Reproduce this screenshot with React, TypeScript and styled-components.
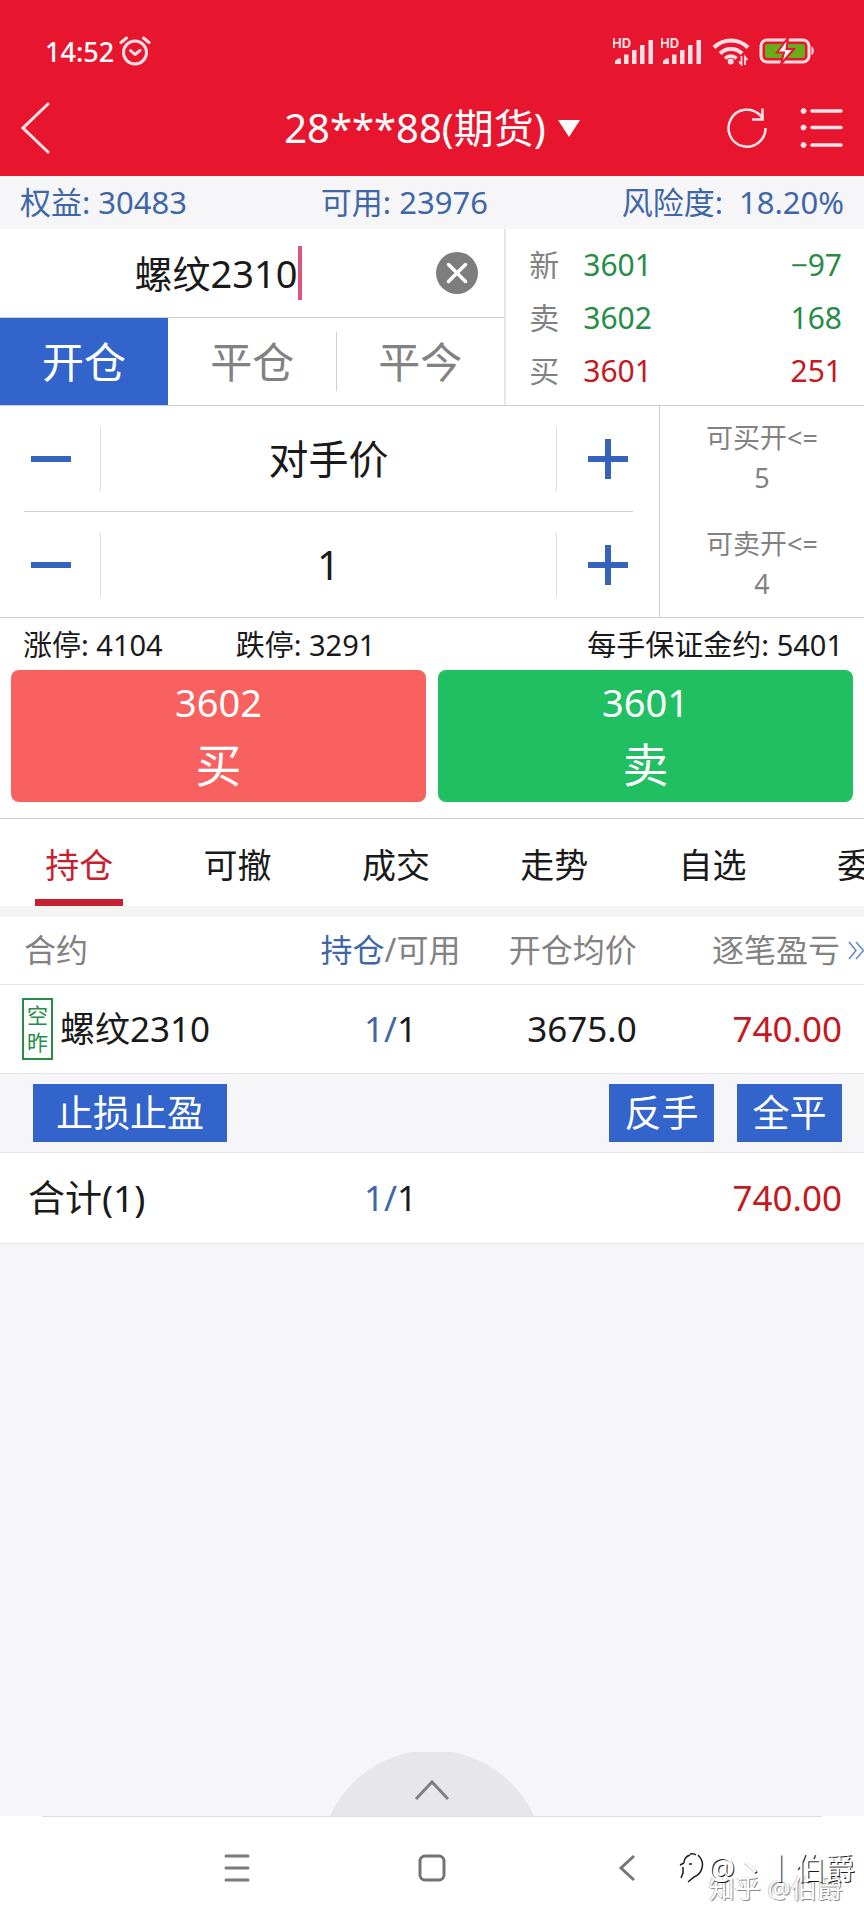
import React, { useState } from "react";
import styled, { createGlobalStyle, css } from "styled-components";

const color = {
  brand: "#e8152f",
  blue: "#3264cc",
  blueText: "#3f67a8",
  green: "#278c46",
  red: "#c3191f",
  ink: "#1a1a1a",
  grey: "#828282",
  line: "#cfcfd2",
  panel: "#f6f6f9",
};

const GlobalStyle = createGlobalStyle`
  * { box-sizing: border-box; }
  body {
    margin: 0;
    background: #fff;
    color: ${color.ink};
    font-family: "Noto Sans", "Noto Sans CJK SC", sans-serif;
  }
  button, input {
    font: inherit;
    color: inherit;
    border: 0;
    margin: 0;
    padding: 0;
    background: none;
    border-radius: 0;
  }
  button { cursor: pointer; }
  svg { display: block; }
`;

const Screen = styled.div`
  display: flex;
  flex-direction: column;
  min-height: 100vh;
  overflow: hidden;
`;

/* Header */
const Header = styled.header`
  background: ${color.brand};
  color: #fff;
`;

const StatusBar = styled.div`
  display: flex;
  align-items: center;
  justify-content: space-between;
  height: 80px;
  padding: 22px 49px 0 45px;
  font-size: 27px;
  font-weight: 500;
`;

const StatusGroup = styled.div<{ $gap: number }>`
  display: flex;
  align-items: center;
  gap: ${(p) => p.$gap}px;
`;

const TitleBar = styled.div`
  display: grid;
  grid-template-columns: 1fr auto 1fr;
  align-items: center;
  height: 96px;
  padding: 0 21px;
`;

const AccountButton = styled.button`
  display: flex;
  align-items: center;
  gap: 12px;
  font-size: 40px;
  line-height: 56px;
`;

const IconButton = styled.button`
  display: flex;
  justify-self: start;
`;

const TitleActions = styled.div`
  display: flex;
  align-items: center;
  justify-content: flex-end;
  gap: 32px;
`;

/* Account figures */
const Funds = styled.section`
  display: flex;
  justify-content: space-between;
  padding: 4px 20px 5px;
  background: ${color.panel};
  color: ${color.blueText};
  font-size: 31px;
  line-height: 44px;
`;

const Risk = styled.span`
  display: flex;
  gap: 16px;
`;

/* Contract and quotes */
const ContractPanel = styled.section`
  display: flex;
  height: 177px;
  border-bottom: 1px solid ${color.line};
`;

const ContractSide = styled.div`
  display: flex;
  flex-direction: column;
  width: 58.6%;
  border-right: 2px solid #e6e6ea;
`;

const SearchRow = styled.div`
  display: flex;
  align-items: center;
  height: 89px;
  border-bottom: 1px solid ${color.line};
`;

const SearchInput = styled.input`
  width: 59%;
  text-align: right;
  font-size: 38px;
  line-height: 56px;
  outline: none;
`;

const Caret = styled.span`
  width: 4px;
  height: 54px;
  background: #dc5580;
`;

const SearchTail = styled.div`
  flex: 1;
  display: flex;
  justify-content: flex-end;
  padding-right: 26px;
`;

const OffsetTabs = styled.div`
  flex: 1;
  display: flex;
`;

const OffsetTab = styled.button<{ $active: boolean; $divided: boolean }>`
  flex: 1;
  position: relative;
  font-size: 42px;
  line-height: 60px;
  color: ${(p) => (p.$active ? "#fff" : color.grey)};
  background: ${(p) => (p.$active ? color.blue : "transparent")};
  ${(p) =>
    p.$divided &&
    css`
      &::before {
        content: "";
        position: absolute;
        left: 0;
        top: 14px;
        bottom: 14px;
        width: 1px;
        background: ${color.line};
      }
    `}
`;

const Quotes = styled.dl`
  flex: 1;
  display: flex;
  flex-direction: column;
  justify-content: space-between;
  margin: 0;
  padding: 15px 22px 13px 23px;
  font-size: 30px;
  line-height: 42px;
`;

const QuoteRow = styled.div`
  display: grid;
  grid-template-columns: 54px 1fr auto;
`;

const QuoteLabel = styled.dt`
  color: ${color.grey};
`;

const QuoteValue = styled.dd<{ $tone: "green" | "red" }>`
  margin: 0;
  color: ${(p) => color[p.$tone]};
`;

/* Price and volume */
const OrderPanel = styled.section`
  display: flex;
  border-bottom: 1px solid ${color.line};
`;

const Steppers = styled.div`
  width: 76.4%;
  padding: 0 26px 0 24px;
  border-right: 1px solid ${color.line};
`;

const Stepper = styled.div`
  display: flex;
  align-items: center;
  height: 105px;
  & + & {
    height: 106px;
    border-top: 1px solid ${color.line};
  }
`;

const StepButton = styled.button<{ $side: "left" | "right" }>`
  display: flex;
  justify-content: ${(p) => (p.$side === "left" ? "flex-start" : "flex-end")};
  align-items: center;
  width: 77px;
  height: 64px;
  padding: 0 5px 0 7px;
  border: 0 solid #dcdce0;
  border-${(p) => (p.$side === "left" ? "right" : "left")}-width: 1px;
`;

const StepInput = styled.input`
  flex: 1;
  min-width: 0;
  text-align: center;
  font-size: 40px;
  line-height: 56px;
`;

const Limits = styled.dl`
  flex: 1;
  display: flex;
  flex-direction: column;
  gap: 26px;
  margin: 0;
  padding-top: 12px;
  text-align: center;
  color: ${color.grey};
  font-size: 27px;
  line-height: 40px;
`;

const LimitItem = styled.div``;

const LimitLabel = styled.dt``;

const LimitValue = styled.dd`
  margin: 0;
`;

/* Price limits and the two order buttons */
const Facts = styled.div`
  display: flex;
  padding: 7px 21px 5px 23px;
  font-size: 29px;
  line-height: 40px;
  white-space: nowrap;
`;

const Fact = styled.span<{ $push?: boolean }>`
  margin-right: ${(p) => (p.$push ? "auto" : "73px")};
  &:last-child {
    margin-right: 0;
  }
`;

const OrderActions = styled.div`
  display: flex;
  gap: 12px;
  padding: 0 11px 16px;
  border-bottom: 1px solid ${color.line};
`;

const OrderButton = styled.button<{ $tone: string }>`
  flex: 1;
  display: flex;
  flex-direction: column;
  align-items: center;
  height: 132px;
  padding-top: 4px;
  border-radius: 8px;
  background: ${(p) => p.$tone};
  color: #fff;
`;

const OrderPrice = styled.span`
  font-size: 38px;
  line-height: 56px;
`;

const OrderSide = styled.span`
  font-size: 46px;
  line-height: 68px;
`;

/* Views */
const Views = styled.nav`
  display: flex;
  height: 98px;
  overflow: hidden;
  border-bottom: 11px solid #f4f4f5;
`;

const ViewTab = styled.button<{ $active: boolean }>`
  position: relative;
  flex: 0 0 18.33%;
  padding-top: 4px;
  font-size: 34px;
  line-height: 48px;
  color: ${(p) => (p.$active ? "#c9202f" : color.ink)};
  ${(p) =>
    p.$active &&
    css`
      &::after {
        content: "";
        position: absolute;
        left: 50%;
        bottom: 0;
        width: 88px;
        height: 7px;
        margin-left: -44px;
        background: #c62033;
      }
    `}
`;

/* Positions */
const Positions = styled.table`
  width: 100%;
  table-layout: fixed;
  border-collapse: collapse;
`;

const Col = styled.col<{ $width?: string }>`
  width: ${(p) => p.$width ?? "auto"};
`;

const Row = styled.tr<{ $height: number; $panel?: boolean }>`
  height: ${(p) => p.$height}px;
  background: ${(p) => (p.$panel ? color.panel : "#fff")};
  border-bottom: 1px solid #e6e6e9;
`;

type Align = "left" | "center" | "right";

const HeadCell = styled.th<{ $align: Align; $edge?: boolean }>`
  position: relative;
  padding: 0 ${(p) => (p.$edge ? 24 : 0)}px 0 ${(p) => (p.$align === "left" ? 24 : 0)}px;
  text-align: ${(p) => p.$align};
  color: ${color.grey};
  font-size: 32px;
  font-weight: 400;
  line-height: 48px;
  white-space: nowrap;
`;

const Cell = styled.td<{ $align: Align; $pad?: string; $tone?: "red"; $large?: boolean }>`
  padding: ${(p) => p.$pad ?? 0};
  text-align: ${(p) => p.$align};
  color: ${(p) => (p.$tone ? color[p.$tone] : color.ink)};
  font-size: ${(p) => (p.$large ? 37 : 35)}px;
  line-height: 50px;
  white-space: nowrap;
`;

const Blue = styled.span`
  color: ${color.blueText};
`;

const Contract = styled.div`
  display: flex;
  align-items: center;
  gap: 7px;
`;

const Badge = styled.span`
  display: flex;
  flex-direction: column;
  width: 31px;
  padding: 2px 0;
  border: 2px solid ${color.green};
  color: ${color.green};
  font-size: 21px;
  line-height: 27px;
  text-align: center;
`;

const MoreColumns = styled.button`
  position: absolute;
  right: -1px;
  top: 24px;
`;

const RowActions = styled.div`
  display: flex;
  gap: 23px;
`;

const RowButton = styled.button<{ $wide?: boolean }>`
  width: ${(p) => (p.$wide ? 194 : 105)}px;
  height: 58px;
  margin-right: ${(p) => (p.$wide ? "auto" : 0)};
  background: ${color.blue};
  color: #fff;
  font-size: 37px;
  line-height: 58px;
`;

/* Bottom */
const Blank = styled.div`
  flex: 1;
  display: flex;
  align-items: flex-end;
  justify-content: center;
  background: ${color.panel};
`;

const Drawer = styled.button`
  display: block;
`;

const SystemNav = styled.nav`
  position: relative;
  display: flex;
  align-items: center;
  height: 104px;
  justify-content: center;
  gap: 168px;
  &::before {
    content: "";
    position: absolute;
    top: 0;
    left: 42px;
    right: 42px;
    height: 1px;
    background: #dedee0;
  }
`;

const Watermark = styled.div`
  position: absolute;
  right: 9px;
  bottom: 32px;
  display: flex;
  align-items: center;
  gap: 4px;
  color: #fff;
  font-size: 30px;
  line-height: 40px;
  text-shadow: 1px 1px 0 #1c1c1c;
`;

const SiteMark = styled.div`
  position: absolute;
  right: 21px;
  bottom: 14px;
  color: #fff;
  font-size: 26px;
  line-height: 36px;
  text-shadow: 1px 1px 0 #8c8c8c, -1px 0 0 #c9c9c9;
`;

const AlarmIcon = () => (
  <svg width="32" height="32" viewBox="0 0 32 32" fill="none" stroke="#ffdfe3" strokeWidth="3" strokeLinecap="round" aria-hidden="true">
    <circle cx="16" cy="17.500" r="11.500" />
    <path d="M2 7.500 7.500 3M30 7.500 24.500 3" />
    <path d="m11.500 15.500 4.500 4 5-4" strokeLinejoin="round" />
  </svg>
);

const SignalIcon = () => (
  <svg width="42" height="30" viewBox="0 0 42 30" fill="#ffdfe3" aria-hidden="true">
    <text x="-1" y="12" fontSize="13" fontWeight="700" fontFamily="Inter">HD</text>
    <path d="M2 28v-3l3-2.500h3V28zM11 18.500h4.500V28H11zM19 14h4.500v14H19zM27 9h4.500v19H27zM35.500 4H40v24h-4.500z" />
  </svg>
);

const WifiIcon = () => (
  <svg width="38" height="30" viewBox="0 0 38 30" fill="none" stroke="#ffdfe3" strokeWidth="4" aria-hidden="true">
    <path d="M2 11.500a24 24 0 0 1 34 0M8 17.500a15.500 15.500 0 0 1 22 0" />
    <path d="M13 22.500a8 8 0 0 1 11.500 0" strokeWidth="3.500" />
    <circle cx="18.700" cy="25.500" r="1.500" strokeWidth="3" />
    <path d="M29.500 20v8.500l-2.500-3M33 29v-8l2.500 3" strokeWidth="1.800" />
  </svg>
);

const BatteryIcon = () => (
  <svg width="56" height="28" viewBox="0 0 56 28" fill="none" aria-hidden="true">
    <rect x="2" y="3" width="48" height="22" rx="6" stroke="#ffdfe3" strokeWidth="3" />
    <rect x="6" y="7" width="40" height="14" rx="2" fill="#68ac1c" />
    <path d="M52.500 9.500c3 .500 3 8 0 8.500z" fill="#ffdfe3" />
    <path d="m29 1-11 14.500h7L22 27l13-15h-7.500z" fill="#fff" stroke={color.brand} strokeWidth="2" />
  </svg>
);

const BackIcon = () => (
  <svg width="29" height="52" viewBox="0 0 29 52" fill="none" stroke="#ffe3e6" strokeWidth="3" strokeLinecap="round" aria-hidden="true">
    <path d="M27 2 2 26l25 24" />
  </svg>
);

const RefreshIcon = () => (
  <svg width="42" height="42" viewBox="0 0 42 42" fill="none" stroke="#ffe3e6" strokeWidth="2.500" aria-hidden="true">
    <path d="M39.500 21A18.500 18.500 0 1 1 34 8l3 4" />
    <path d="M36.500 1.500v11H26" />
  </svg>
);

const ListIcon = () => (
  <svg width="43" height="42" viewBox="0 0 43 42" fill="#ffe3e6" stroke="#ffe3e6" strokeLinecap="round" aria-hidden="true">
    <path d="M12 4h29M12 20.500h29M12 38h29" strokeWidth="3.500" />
    <circle cx="3.500" cy="4" r="2.500" />
    <circle cx="3.500" cy="20.500" r="2.500" />
    <circle cx="3.500" cy="38" r="2.500" />
  </svg>
);

const ClearIcon = () => (
  <svg width="42" height="42" viewBox="0 0 42 42" aria-hidden="true">
    <circle cx="21" cy="21" r="21" fill="#7d7d7d" />
    <path d="m12.500 12.500 17 17m0-17-17 17" stroke="#fff" strokeWidth="3.500" strokeLinecap="round" />
  </svg>
);

const SignIcon = ({ plus }: { plus?: boolean }) => (
  <svg width="40" height="40" viewBox="0 0 40 40" stroke="#3563bb" strokeWidth="6" aria-hidden="true">
    <path d={plus ? "M0 20h40M20 0v40" : "M0 20h40"} />
  </svg>
);

const quotes = [
  { label: "新", price: "3601", size: "−97", tone: "green" as const },
  { label: "卖", price: "3602", size: "168", tone: "green" as const },
  { label: "买", price: "3601", size: "251", tone: "red" as const },
];

export default function App() {
  const [contract, setContract] = useState("螺纹2310");
  const [offset, setOffset] = useState("开仓");
  const [price, setPrice] = useState("对手价");
  const [volume, setVolume] = useState(1);
  const [view, setView] = useState("持仓");

  return (
    <Screen>
      <GlobalStyle />
      <Header>
        <StatusBar>
          <StatusGroup $gap={5}>
            <span>14:52</span>
            <AlarmIcon />
          </StatusGroup>
          <StatusGroup $gap={9}>
            <StatusGroup $gap={6}>
              <SignalIcon />
              <SignalIcon />
            </StatusGroup>
            <WifiIcon />
            <BatteryIcon />
          </StatusGroup>
        </StatusBar>
        <TitleBar>
          <IconButton aria-label="返回"><BackIcon /></IconButton>
          <AccountButton>
            28***88(期货)
            <svg width="22" height="17" viewBox="0 0 22 17" fill="#fff" aria-hidden="true"><path d="M0 0h22L11 17z" /></svg>
          </AccountButton>
          <TitleActions>
            <IconButton aria-label="刷新"><RefreshIcon /></IconButton>
            <IconButton aria-label="菜单"><ListIcon /></IconButton>
          </TitleActions>
        </TitleBar>
      </Header>

      <Funds>
        <span>权益: 30483</span>
        <span>可用: 23976</span>
        <Risk><span>风险度:</span><span>18.20%</span></Risk>
      </Funds>

      <ContractPanel>
        <ContractSide>
          <SearchRow>
            <SearchInput aria-label="合约" value={contract} onChange={(e) => setContract(e.target.value)} />
            <Caret />
            <SearchTail>
              <IconButton aria-label="清除" onClick={() => setContract("")}><ClearIcon /></IconButton>
            </SearchTail>
          </SearchRow>
          <OffsetTabs>
            {["开仓", "平仓", "平今"].map((name, i) => (
              <OffsetTab key={name} $active={name === offset} $divided={i === 2} onClick={() => setOffset(name)}>
                {name}
              </OffsetTab>
            ))}
          </OffsetTabs>
        </ContractSide>
        <Quotes>
          {quotes.map((q) => (
            <QuoteRow key={q.label}>
              <QuoteLabel>{q.label}</QuoteLabel>
              <QuoteValue $tone={q.tone}>{q.price}</QuoteValue>
              <QuoteValue $tone={q.tone}>{q.size}</QuoteValue>
            </QuoteRow>
          ))}
        </Quotes>
      </ContractPanel>

      <OrderPanel>
        <Steppers>
          <Stepper>
            <StepButton $side="left" aria-label="降低价格"><SignIcon /></StepButton>
            <StepInput aria-label="价格" value={price} onChange={(e) => setPrice(e.target.value)} />
            <StepButton $side="right" aria-label="提高价格"><SignIcon plus /></StepButton>
          </Stepper>
          <Stepper>
            <StepButton $side="left" aria-label="减少手数" onClick={() => setVolume(Math.max(1, volume - 1))}><SignIcon /></StepButton>
            <StepInput aria-label="手数" value={volume} onChange={(e) => setVolume(Number(e.target.value) || 1)} />
            <StepButton $side="right" aria-label="增加手数" onClick={() => setVolume(volume + 1)}><SignIcon plus /></StepButton>
          </Stepper>
        </Steppers>
        <Limits>
          <LimitItem><LimitLabel>可买开&lt;=</LimitLabel><LimitValue>5</LimitValue></LimitItem>
          <LimitItem><LimitLabel>可卖开&lt;=</LimitLabel><LimitValue>4</LimitValue></LimitItem>
        </Limits>
      </OrderPanel>

      <Facts>
        <Fact>涨停: 4104</Fact>
        <Fact $push>跌停: 3291</Fact>
        <Fact>每手保证金约: 5401</Fact>
      </Facts>
      <OrderActions>
        <OrderButton $tone="#f96060"><OrderPrice>3602</OrderPrice><OrderSide>买</OrderSide></OrderButton>
        <OrderButton $tone="#20bf62"><OrderPrice>3601</OrderPrice><OrderSide>卖</OrderSide></OrderButton>
      </OrderActions>

      <Views>
        {["持仓", "可撤", "成交", "走势", "自选", "委托"].map((name) => (
          <ViewTab key={name} $active={name === view} onClick={() => setView(name)}>{name}</ViewTab>
        ))}
      </Views>

      <Positions>
        <colgroup>
          <Col $width="36%" />
          <Col $width="18.4%" />
          <Col $width="19.3%" />
          <Col />
        </colgroup>
        <thead>
          <Row $height={67}>
            <HeadCell $align="left">合约</HeadCell>
            <HeadCell $align="center"><Blue>持仓</Blue>/可用</HeadCell>
            <HeadCell $align="right">开仓均价</HeadCell>
            <HeadCell $align="right" $edge>
              逐笔盈亏
              <MoreColumns aria-label="更多列">
                <svg width="17" height="19" viewBox="0 0 17 19" fill="none" stroke="#5b87cc" strokeWidth="1.500" aria-hidden="true">
                  <path d="m1 1 7 8.500L1 18M8 1l7.500 8.500L8 18" />
                </svg>
              </MoreColumns>
            </HeadCell>
          </Row>
        </thead>
        <tbody>
          <Row $height={89}>
            <Cell $align="left" $pad="0 0 0 22px">
              <Contract><Badge><span>空</span><span>昨</span></Badge>螺纹2310</Contract>
            </Cell>
            <Cell $align="center"><Blue>1/</Blue>1</Cell>
            <Cell $align="right">3675.0</Cell>
            <Cell $align="right" $tone="red" $pad="0 22px 0 0">740.00</Cell>
          </Row>
          <Row $height={79} $panel>
            <Cell colSpan={4} $align="left" $pad="0 22px 0 33px">
              <RowActions>
                <RowButton $wide>止损止盈</RowButton>
                <RowButton>反手</RowButton>
                <RowButton>全平</RowButton>
              </RowActions>
            </Cell>
          </Row>
          <Row $height={91}>
            <Cell $align="left" $large $pad="0 0 0 28px">合计(1)</Cell>
            <Cell $align="center"><Blue>1/</Blue>1</Cell>
            <Cell $align="right" />
            <Cell $align="right" $tone="red" $pad="0 22px 0 0">740.00</Cell>
          </Row>
        </tbody>
      </Positions>

      <Blank>
        <Drawer aria-label="展开">
          <svg width="204" height="64" viewBox="0 0 204 64" fill="none" aria-hidden="true">
            <path d="M0 64a112 112 0 0 1 204 0z" fill="#e7e7e9" />
            <path d="m86 47 16-17 16 17" stroke="#808080" strokeWidth="3" />
          </svg>
        </Drawer>
      </Blank>

      <SystemNav>
        <IconButton aria-label="最近任务">
          <svg width="26" height="28" viewBox="0 0 26 28" stroke="#7a7a7a" strokeWidth="3" strokeLinecap="round" aria-hidden="true"><path d="M2 2h22M2 14h22M2 26h22" /></svg>
        </IconButton>
        <IconButton aria-label="主屏幕">
          <svg width="28" height="28" viewBox="0 0 28 28" fill="none" stroke="#747474" strokeWidth="3" aria-hidden="true"><rect x="2" y="2" width="24" height="24" rx="5" /></svg>
        </IconButton>
        <IconButton aria-label="返回上一页">
          <svg width="26" height="28" viewBox="0 0 26 28" fill="none" stroke="#777" strokeWidth="3" aria-hidden="true"><path d="M20 2 7 14l13 12" /></svg>
        </IconButton>
        <SiteMark>知乎 @伯爵</SiteMark>
        <Watermark>
          <svg width="26" height="32" viewBox="0 0 26 32" fill="none" stroke="#1c1c1c" strokeWidth="1.500" aria-hidden="true">
            <path d="M2 13l4-2M6 11q0-6 6-8M5 15v6l-2 5M12 2q4-1 6 1M11 12h3M20 3q6 6 4 13-2 7-8 9l-6 5" />
          </svg>
          <span>@丶丨伯爵</span>
        </Watermark>
      </SystemNav>
    </Screen>
  );
}
